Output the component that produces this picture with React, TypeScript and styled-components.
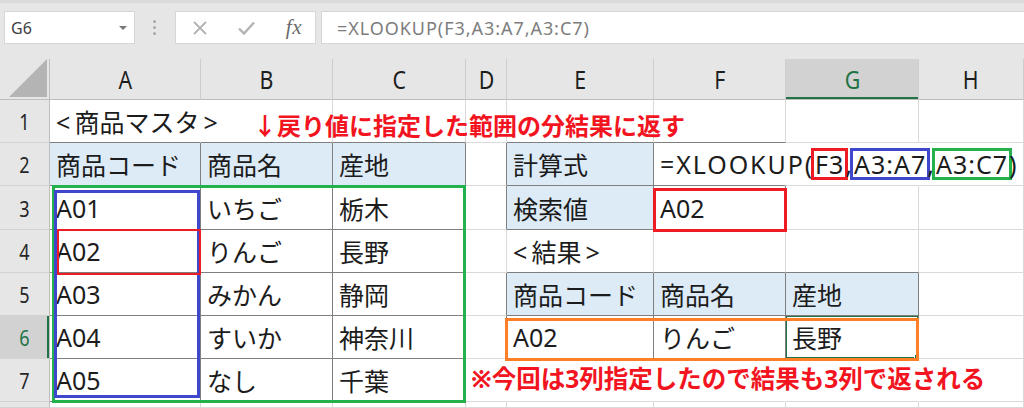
import React from "react";
import styled, { createGlobalStyle } from "styled-components";

const GlobalStyle = createGlobalStyle`
  html, body { margin: 0; padding: 0; background: #fff; }
  body {
    width: 1024px; height: 408px; overflow: hidden;
    font-family: "Noto Sans", "Noto Sans CJK JP", sans-serif;
  }
  * { box-sizing: border-box; }
`;

const COL_W = [50, 151, 132, 133, 41, 147, 132, 133, 105];
const ROW_H = [41, 43, 43, 44, 43, 43, 43, 43, 6];
const LETTERS = ["A", "B", "C", "D", "E", "F", "G", "H"];

const GREEN_SEL = "#217346";
const RED = "#ed1c24";
const BLUE = "#3f48cc";
const GREEN = "#22b14c";
const ORANGE = "#ff7f27";

const TABLES = [
  { c1: 0, c2: 2, r1: 2, r2: 7 },
  { c1: 4, c2: 5, r1: 2, r2: 3 },
  { c1: 4, c2: 6, r1: 5, r2: 6 },
];
const inTable = (r: number, c: number) =>
  TABLES.some((t) => r >= t.r1 && r <= t.r2 && c >= t.c1 && c <= t.c2);
const HIDE_RIGHT = new Set(["A1", "F2", "G2", "D7", "E7", "F7", "G7"]);

/* ---------- toolbar ---------- */
const Toolbar = styled.div`
  height: 59px;
  background: #e6e6e6;
  border-top: 3px solid #dadada;
  display: flex;
  align-items: flex-start;
  padding: 8px 0 0 4px;
`;

const NameBox = styled.div`
  width: 131px;
  height: 33px;
  background: #fff;
  border: 1px solid #d6d6d6;
  display: flex;
  align-items: center;
  justify-content: space-between;
  padding: 0 6px 0 6px;
  font-size: 16px;
  color: #404040;
`;

const Caret = styled.span`
  width: 0;
  height: 0;
  border-left: 4.5px solid transparent;
  border-right: 4.5px solid transparent;
  border-top: 4.5px solid #777;
  margin-right: 1px;
`;

const Grip = styled.div`
  height: 33px;
  margin: 0 19px 0 18px;
  display: flex;
  flex-direction: column;
  justify-content: center;
  gap: 3px;
`;

const Dot = styled.span`
  width: 3px;
  height: 3px;
  border-radius: 50%;
  background: #a9a9a9;
`;

const ButtonBox = styled.div`
  width: 141px;
  height: 33px;
  background: #fff;
  border: 1px solid #d6d6d6;
  display: flex;
  align-items: center;
  justify-content: space-between;
  padding: 0 13px 0 17px;
`;

const Fx = styled.span`
  font-family: "Liberation Serif", serif;
  font-style: italic;
  font-size: 21px;
  color: #6b6b6b;
  letter-spacing: 0.5px;
`;

const FormulaInput = styled.div`
  flex: 1;
  height: 33px;
  margin-left: 5px;
  background: #fff;
  border: 1px solid #d6d6d6;
  border-right: none;
  display: flex;
  align-items: center;
  padding-left: 15px;
  font-size: 18px;
  letter-spacing: 0.95px;
  color: #7d7d7d;
`;

/* ---------- sheet ---------- */
const SheetWrap = styled.div`
  position: relative;
`;

const Sheet = styled.div`
  display: grid;
  grid-template-columns: ${COL_W.map((w) => w + "px").join(" ")};
  grid-template-rows: ${ROW_H.map((h) => h + "px").join(" ")};
`;

const Corner = styled.div`
  background: #e6e6e6;
  border-right: 1px solid #bdbdbd;
  border-bottom: 1px solid #bdbdbd;
  display: flex;
  align-items: flex-end;
  justify-content: flex-end;
  padding: 0 2px 2px 0;
`;

const ColHead = styled.div<{ $sel?: boolean }>`
  background: ${(p) => (p.$sel ? "#d2d2d2" : "#e6e6e6")};
  border-right: 1px solid #cdcdcd;
  border-bottom: 1px solid #bdbdbd;
  box-shadow: ${(p) => (p.$sel ? `inset 0 -2px 0 ${GREEN_SEL}` : "none")};
  display: flex;
  align-items: center;
  justify-content: center;
  font-size: 26px;
  color: ${(p) => (p.$sel ? GREEN_SEL : "#1e1e1e")};
`;

const Narrow = styled.span`
  display: inline-block;
  transform: scaleX(0.82);
`;

const RowHead = styled.div<{ $sel?: boolean }>`
  background: ${(p) => (p.$sel ? "#d2d2d2" : "#e6e6e6")};
  border-right: 1px solid #bdbdbd;
  border-bottom: 1px solid #d2d2d2;
  box-shadow: ${(p) => (p.$sel ? `inset -2px 0 0 ${GREEN_SEL}` : "none")};
  display: flex;
  align-items: center;
  justify-content: center;
  font-size: 22px;
  color: ${(p) => (p.$sel ? GREEN_SEL : "#262626")};
`;

const Cell = styled.div<{
  $fill?: boolean;
  $rDark?: boolean;
  $bDark?: boolean;
  $hideR?: boolean;
  $over?: boolean;
  $sel?: boolean;
  $note?: boolean;
}>`
  position: relative;
  z-index: ${(p) => (p.$over ? 1 : "auto")};
  display: flex;
  align-items: center;
  padding: ${(p) => (p.$note ? "0 0 6px 5px" : "0 0 0 6px")};
  border-right: 1px solid
    ${(p) => (p.$hideR ? "transparent" : p.$rDark ? "#7f7f7f" : "#dadada")};
  border-bottom: 1px solid ${(p) => (p.$bDark ? "#7f7f7f" : "#dadada")};
  background: ${(p) => (p.$fill ? "#ddebf7" : "transparent")};
  font-size: 25px;
  color: #1c1c1c;
  white-space: nowrap;
  overflow: ${(p) => (p.$over ? "visible" : "hidden")};

  ${(p) =>
    p.$sel &&
    `
    &::after {
      content: "";
      position: absolute;
      left: -1px; top: -1px; right: -1px; bottom: -1px;
      border: 2px solid ${GREEN_SEL};
    }
    &::before {
      content: "";
      position: absolute;
      right: -4px; bottom: -4px;
      width: 6px; height: 6px;
      background: ${GREEN_SEL};
      border: 1px solid #fff;
      z-index: 1;
    }
  `}
`;

const FormulaText = styled.span`
  letter-spacing: 1px;
`;

const FnName = styled.span`
  letter-spacing: 1.9px;
`;

const Ref = styled.span<{ $c: string }>`
  display: inline-block;
  height: 26px;
  line-height: 26px;
  padding: 0 1px;
  outline: 3px solid ${(p) => p.$c};
`;

const NoteText = styled.span`
  font-size: 24.5px;
  font-weight: 700;
  color: #f2141e;
`;

/* ---------- overlays ---------- */
const Overlay = styled.div`
  position: absolute;
  inset: 0;
  pointer-events: none;
  z-index: 2;
`;

const Frame = styled.div<{ $c: string; $w?: number }>`
  position: absolute;
  border: ${(p) => p.$w ?? 3}px solid ${(p) => p.$c};
`;

const Callout = styled.div`
  position: absolute;
  left: 253px;
  top: 41px;
  height: 43px;
  display: flex;
  align-items: center;
  padding-top: 5px;
  font-size: 24px;
  font-weight: 700;
  color: #f2141e;
  white-space: nowrap;
`;

const Formula = () => (
  <FormulaText>
    <FnName>=XLOOKUP(</FnName>
    <Ref $c={RED}>F3</Ref>,<Ref $c={BLUE}>A3:A7</Ref>,<Ref $c={GREEN}>A3:C7</Ref>)
  </FormulaText>
);

type Spec = { text?: React.ReactNode; fill?: boolean; over?: boolean; note?: boolean };

const DATA: Record<string, Spec> = {
  A1: { text: "<\u2009商品マスタ\u2009>", over: true },
  A2: { text: "商品コード", fill: true },
  B2: { text: "商品名", fill: true },
  C2: { text: "産地", fill: true },
  E2: { text: "計算式", fill: true },
  F2: { text: <Formula />, over: true },
  A3: { text: "A01" },
  B3: { text: "いちご" },
  C3: { text: "栃木" },
  E3: { text: "検索値", fill: true },
  F3: { text: "A02" },
  A4: { text: "A02" },
  B4: { text: "りんご" },
  C4: { text: "長野" },
  E4: { text: "<\u2009結果\u2009>" },
  A5: { text: "A03" },
  B5: { text: "みかん" },
  C5: { text: "静岡" },
  E5: { text: "商品コード", fill: true },
  F5: { text: "商品名", fill: true },
  G5: { text: "産地", fill: true },
  A6: { text: "A04" },
  B6: { text: "すいか" },
  C6: { text: "神奈川" },
  E6: { text: "A02" },
  F6: { text: "りんご" },
  G6: { text: "長野" },
  A7: { text: "A05" },
  B7: { text: "なし" },
  C7: { text: "千葉" },
  D7: {
    text: <NoteText>※今回は3列指定したので結果も3列で返される</NoteText>,
    over: true,
    note: true,
  },
};

const SEL_COL = 6;
const SEL_ROW = 6;
const VISIBLE_ROWS = 7;

export default function App() {
  const items: React.ReactNode[] = [];
  items.push(
    <Corner key="corner">
      <svg width="38" height="38" viewBox="0 0 38 38">
        <polygon points="0,38 38,0 38,38" fill="#b4b4b4" />
      </svg>
    </Corner>
  );
  LETTERS.forEach((l, i) =>
    items.push(
      <ColHead key={"h" + l} $sel={i === SEL_COL}>
        <Narrow>{l}</Narrow>
      </ColHead>
    )
  );

  for (let r = 1; r <= 8; r++) {
    items.push(
      <RowHead key={"r" + r} $sel={r === SEL_ROW}>
        {r <= VISIBLE_ROWS && <Narrow>{r}</Narrow>}
      </RowHead>
    );
    LETTERS.forEach((l, c) => {
      const id = l + r;
      const spec = DATA[id] ?? {};
      const rDark = inTable(r, c) || inTable(r, c + 1);
      const bDark = inTable(r, c) || inTable(r + 1, c);
      items.push(
        <Cell
          key={id}
          $fill={spec.fill}
          $rDark={rDark}
          $bDark={bDark}
          $hideR={HIDE_RIGHT.has(id)}
          $over={spec.over}
          $note={spec.note}
          $sel={r === SEL_ROW && c === SEL_COL}
        >
          {spec.text}
        </Cell>
      );
    });
  }

  return (
    <>
      <GlobalStyle />
      <Toolbar>
        <NameBox>
          G6
          <Caret />
        </NameBox>
        <Grip>
          <Dot />
          <Dot />
          <Dot />
        </Grip>
        <ButtonBox>
          <svg width="14" height="14" viewBox="0 0 14 14">
            <path d="M1 1 L13 13 M13 1 L1 13" stroke="#b3b3b3" strokeWidth="1.8" />
          </svg>
          <svg width="17" height="14" viewBox="0 0 17 14">
            <path d="M1 7.5 L6 12.5 L16 1.5" stroke="#b3b3b3" strokeWidth="2.4" fill="none" />
          </svg>
          <Fx>fx</Fx>
        </ButtonBox>
        <FormulaInput>=XLOOKUP(F3,A3:A7,A3:C7)</FormulaInput>
      </Toolbar>
      <SheetWrap>
        <Sheet>{items}</Sheet>
        <Overlay>
          <Callout>↓戻り値に指定した範囲の分結果に返す</Callout>
          <Frame $c={GREEN} style={{ left: 52, top: 126, width: 414, height: 218 }} />
          <Frame $c={BLUE} style={{ left: 54, top: 131, width: 146, height: 208 }} />
          <Frame $c={RED} $w={2.5} style={{ left: 57, top: 170, width: 144, height: 46 }} />
          <Frame $c={RED} style={{ left: 653, top: 129, width: 134, height: 44 }} />
          <Frame $c={ORANGE} style={{ left: 505, top: 259, width: 414, height: 43 }} />
        </Overlay>
      </SheetWrap>
    </>
  );
}
